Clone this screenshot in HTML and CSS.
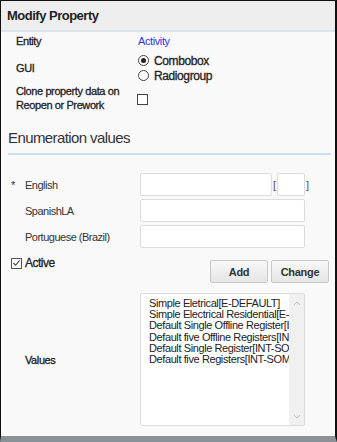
FILE: index.html
```html
<!DOCTYPE html>
<html lang="en">
<head>
    <meta charset="UTF-8">
    <title>Modify Property</title>
    <link rel="stylesheet" href="styles.css">
</head>
<body>
    <div class="dialog">
        <div class="dialog-header">Modify Property</div>

        <div class="props">
            <div class="prop-row entity-row">
                <div class="prop-label">Entity</div>
                <div class="prop-value"><a class="entity-link" href="#">Activity</a></div>
            </div>
            <div class="prop-row gui-row">
                <div class="prop-label">GUI</div>
                <div class="prop-value radios">
                    <label class="radio"><span class="radio-dot checked"></span>Combobox</label>
                    <label class="radio"><span class="radio-dot"></span>Radiogroup</label>
                </div>
            </div>
            <div class="prop-row clone-row">
                <div class="prop-label">Clone property data on Reopen or Prework</div>
                <div class="prop-value"><span class="check-box"></span></div>
            </div>
        </div>

        <h2 class="section-title">Enumeration values</h2>

        <div class="enum">
            <div class="enum-row">
                <div class="enum-label"><span class="req">*</span>English</div>
                <div class="enum-field">
                    <input class="text-input short" type="text">
                    <span class="bracket">[</span>
                    <input class="text-input code" type="text">
                    <span class="bracket">]</span>
                </div>
            </div>
            <div class="enum-row">
                <div class="enum-label">SpanishLA</div>
                <div class="enum-field"><input class="text-input" type="text"></div>
            </div>
            <div class="enum-row">
                <div class="enum-label">Portuguese (Brazil)</div>
                <div class="enum-field"><input class="text-input" type="text"></div>
            </div>

            <div class="action-row">
                <label class="active-check"><span class="check-box small checked">
                    <svg width="10" height="10" viewBox="0 0 10 10"><path d="M1.5 5 L4 7.5 L8.5 2" fill="none" stroke="#444" stroke-width="1.2"/></svg>
                </span>Active</label>
                <div class="buttons">
                    <button class="btn">Add</button>
                    <button class="btn">Change</button>
                </div>
            </div>

            <div class="values-row">
                <div class="values-label">Values</div>
                <div class="listbox">
                    <div class="list-items">
                        <div>Simple Eletrical[E-DEFAULT]</div>
                        <div>Simple Electrical Residential[E-RESIDENTIAL]</div>
                        <div>Default Single Offline Register[INT-SOFF]</div>
                        <div>Default five Offline Registers[INT-FOFF]</div>
                        <div>Default Single Register[INT-SON]</div>
                        <div>Default five Registers[INT-SOM]</div>
                    </div>
                    <div class="scroll">
                        <svg width="8" height="5" viewBox="0 0 8 5"><path d="M1 4 L4 1 L7 4" fill="none" stroke="#c4c4c4" stroke-width="1"/></svg>
                        <svg width="8" height="5" viewBox="0 0 8 5"><path d="M1 1 L4 4 L7 1" fill="none" stroke="#c4c4c4" stroke-width="1"/></svg>
                    </div>
                </div>
            </div>
        </div>
    </div>
</body>
</html>
```

FILE: styles.css
```css
body {
    margin: 0;
    font-family: "Liberation Sans", Arial, sans-serif;
    color: #333;
}
.dialog {
    width: 337px;
    height: 442px;
    box-sizing: border-box;
    border-top: 1px solid #111;
    border-left: 1px solid #111;
    border-right: 2px solid #111;
    border-bottom: 6px solid #8c9196;
    background-color: #f9f9f9;
    overflow: hidden;
}
.dialog-header {
    height: 29px;
    line-height: 30px;
    padding-left: 6px;
    background-color: #eeeeee;
    border-bottom: 2px solid #dde2e7;
    font-size: 13px;
    font-weight: bold;
    letter-spacing: -0.5px;
    color: #222;
}
.props {
    padding: 1px 0 0 15px;
}
.prop-row {
    display: grid;
    grid-template-columns: 122px 1fr;
    align-items: center;
    font-size: 11px;
    letter-spacing: -0.4px;
}
.prop-label {
    color: #222;
    -webkit-text-stroke: 0.3px #222;
}
.entity-row {
    height: 15px;
}
.entity-link {
    color: #3333ee;
    text-decoration: none;
    font-size: 11px;
}
.gui-row {
    margin-top: 5px;
}
.radios {
    display: flex;
    flex-direction: column;
}
.radio {
    display: flex;
    align-items: center;
    font-size: 12px;
    letter-spacing: -0.4px;
    color: #222;
    -webkit-text-stroke: 0.3px #222;
    height: 15px;
}
.radio-dot {
    width: 11px;
    height: 11px;
    border: 1px solid #444;
    border-radius: 50%;
    background: #fff;
    margin-right: 5px;
    position: relative;
    box-sizing: border-box;
}
.radio-dot.checked::after {
    content: "";
    position: absolute;
    left: 2px;
    top: 2px;
    width: 5px;
    height: 5px;
    border-radius: 50%;
    background: #222;
}
.clone-row {
    margin-top: 1px;
    line-height: 14px;
}
.check-box {
    display: inline-block;
    width: 11px;
    height: 11px;
    border: 1px solid #444;
    background: #fff;
    box-sizing: border-box;
    margin-left: -1px;
    vertical-align: middle;
}
.section-title {
    margin: 17px 0 0 7px;
    padding-bottom: 6px;
    width: 323px;
    font-size: 15px;
    font-weight: normal;
    letter-spacing: -0.6px;
    color: #333;
    border-bottom: 2px solid #c9def0;
    line-height: 18px;
}
.enum {
    padding-top: 18px;
}
.enum-row {
    display: grid;
    grid-template-columns: 139px 1fr;
    align-items: center;
    height: 22px;
    margin-bottom: 4px;
    font-size: 11px;
    letter-spacing: -0.5px;
}
.enum-label {
    padding-left: 24px;
    position: relative;
    color: #333;
}
.req {
    position: absolute;
    left: 10px;
    top: 0;
}
.enum-field {
    display: flex;
    align-items: center;
}
.text-input {
    width: 165px;
    height: 23px;
    box-sizing: border-box;
    border: 1px solid #dcdcdc;
    border-radius: 2px;
    background: #fff;
    margin: 0;
    padding: 0;
}
.text-input.short {
    width: 132px;
}
.text-input.code {
    width: 28px;
}
.bracket {
    font-size: 11px;
    color: #555;
    width: 4px;
    padding-left: 1px;
}
.action-row {
    display: flex;
    justify-content: space-between;
    align-items: flex-start;
    margin-top: 3px;
    padding: 0 6px 0 10px;
}
.active-check {
    display: flex;
    align-items: center;
    font-size: 12px;
    letter-spacing: -0.5px;
    color: #222;
    -webkit-text-stroke: 0.3px #222;
    margin-top: 5px;
}
.check-box.small {
    width: 11px;
    height: 11px;
    margin: 0 3px 0 0;
    border-color: #555;
    display: flex;
    align-items: center;
    justify-content: center;
}
.buttons {
    display: flex;
    gap: 3px;
    margin-top: 9px;
}
.btn {
    width: 58px;
    height: 23px;
    font-family: "Liberation Sans", Arial, sans-serif;
    font-size: 11px;
    font-weight: bold;
    letter-spacing: -0.3px;
    color: #333;
    background: linear-gradient(#f8f8f8, #e6e6e6);
    border: 1px solid #c8c8c8;
    border-radius: 2px;
    padding: 0;
}
.values-row {
    display: grid;
    grid-template-columns: 139px 1fr;
    align-items: center;
    margin-top: 10px;
}
.values-label {
    padding-left: 24px;
    font-size: 11px;
    letter-spacing: -0.4px;
    color: #222;
    -webkit-text-stroke: 0.3px #222;
}
.listbox {
    width: 165px;
    height: 133px;
    box-sizing: border-box;
    border: 1px solid #dcdcdc;
    border-radius: 2px;
    background: #fff;
    display: flex;
    overflow: hidden;
}
.list-items {
    flex: 1;
    padding: 4px 0 0 8px;
    font-size: 11px;
    line-height: 11.2px;
    letter-spacing: -0.4px;
    color: #222;
    white-space: nowrap;
    overflow: hidden;
}
.scroll {
    width: 15px;
    background: #f0f0f0;
    display: flex;
    flex-direction: column;
    justify-content: space-between;
    align-items: center;
    padding: 7px 0 6px;
}
```
